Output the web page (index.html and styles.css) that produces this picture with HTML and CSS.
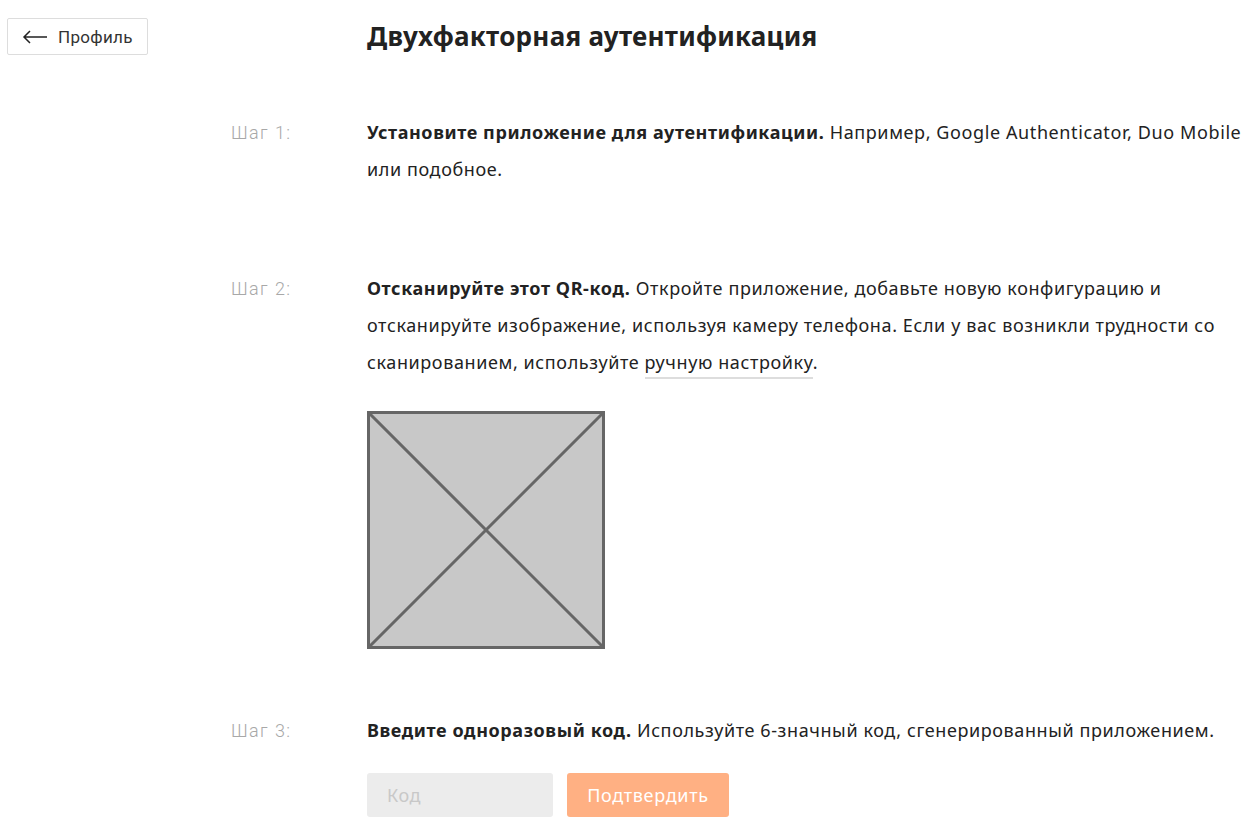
FILE: index.html
```html
<!DOCTYPE html>
<html lang="ru">
<head>
<meta charset="utf-8">
<title>Двухфакторная аутентификация</title>
<link rel="stylesheet" href="styles.css">
</head>
<body>
<div class="page">
  <header class="header">
    <a class="back-btn" href="#">
      <svg class="back-icon" width="26" height="14" viewBox="0 0 26 14" aria-hidden="true">
        <path d="M25 7H2M8 1L2 7l6 6" fill="none" stroke="#222" stroke-width="1.5"/>
      </svg>
      <span>Профиль</span>
    </a>
    <h1 class="title">Двухфакторная аутентификация</h1>
  </header>

  <section class="step step-1">
    <div class="step-label">Шаг 1:</div>
    <div class="step-body">
      <p class="step-text"><b>Установите приложение для аутентификации.</b> Например, Google Authenticator, Duo Mobile или подобное.</p>
    </div>
  </section>

  <section class="step step-2">
    <div class="step-label">Шаг 2:</div>
    <div class="step-body">
      <p class="step-text"><b>Отсканируйте этот QR-код.</b> Откройте приложение, добавьте новую конфигурацию и отсканируйте изображение, используя камеру телефона. Если у вас возникли трудности со сканированием, используйте <a class="link" href="#">ручную настройку</a>.</p>
      <div class="qr">
        <svg width="238" height="238" viewBox="0 0 238 238" aria-hidden="true">
          <rect x="1.5" y="1.5" width="235" height="235" fill="#c8c8c8" stroke="#666" stroke-width="3"/>
          <path d="M2 2L236 236M236 2L2 236" stroke="#666" stroke-width="3"/>
        </svg>
      </div>
    </div>
  </section>

  <section class="step step-3">
    <div class="step-label">Шаг 3:</div>
    <div class="step-body">
      <p class="step-text"><b>Введите одноразовый код.</b> Используйте 6-значный код, сгенерированный приложением.</p>
      <form class="code-form">
        <input class="code-input" type="text" placeholder="Код">
        <button class="confirm-btn" type="button">Подтвердить</button>
      </form>
    </div>
  </section>
</div>
</body>
</html>
```

FILE: styles.css
```css
* { box-sizing: border-box; }
html, body { margin: 0; padding: 0; background: #fff; }
body {
  font-family: "Noto Sans", "Liberation Sans", sans-serif;
  color: #222;
}
.page {
  padding: 18px 0 0 7px;
}
.header {
  display: flex;
  align-items: flex-start;
}
.back-btn {
  display: flex;
  align-items: center;
  width: 141px;
  height: 37px;
  padding-left: 14px;
  border: 1px solid #ddd;
  border-radius: 2px;
  color: #333;
  text-decoration: none;
  font-family: Roboto, "Liberation Sans", sans-serif;
  font-size: 17px;
  letter-spacing: 0.3px;
}
.back-icon { margin-right: 10px; }
.title {
  margin: 0 0 0 219px;
  font-size: 26px;
  line-height: 37px;
  font-weight: 700;
  letter-spacing: 0.25px;
  color: #222;
}
.step {
  display: grid;
  grid-template-columns: 136px 877px;
  margin-left: 224px;
}
.step-1 { margin-top: 59px; }
.step-2 { margin-top: 82px; }
.step-3 { margin-top: 63px; }
.step-label {
  font-family: Roboto, "Liberation Sans", sans-serif;
  font-size: 18px;
  font-weight: 300;
  letter-spacing: 1.4px;
  line-height: 37px;
  color: #a8a8a8;
}
.step-text {
  margin: 0;
  font-size: 18px;
  letter-spacing: 0.6px;
  line-height: 37px;
  color: #222;
}
.step-text b { font-weight: 700; }
.link {
  color: #222;
  text-decoration: none;
  border-bottom: 2px solid #ddd;
  padding-bottom: 3px;
}
.qr {
  margin-top: 30px;
  width: 238px;
  height: 238px;
}
.qr svg { display: block; }
.code-form {
  display: flex;
  gap: 14px;
  margin-top: 24px;
}
.code-input {
  width: 186px;
  height: 44px;
  border: none;
  border-radius: 3px;
  background: #ececec;
  padding: 0 20px;
  font-family: "Noto Sans", "Liberation Sans", sans-serif;
  font-size: 18px;
  letter-spacing: 0.5px;
  color: #222;
}
.code-input::placeholder { color: #c8c8c8; }
.confirm-btn {
  width: 162px;
  height: 44px;
  border: none;
  border-radius: 3px;
  background: #ffb083;
  color: #fff;
  font-family: "Noto Sans", "Liberation Sans", sans-serif;
  font-size: 18px;
  letter-spacing: 0.7px;
}
```
